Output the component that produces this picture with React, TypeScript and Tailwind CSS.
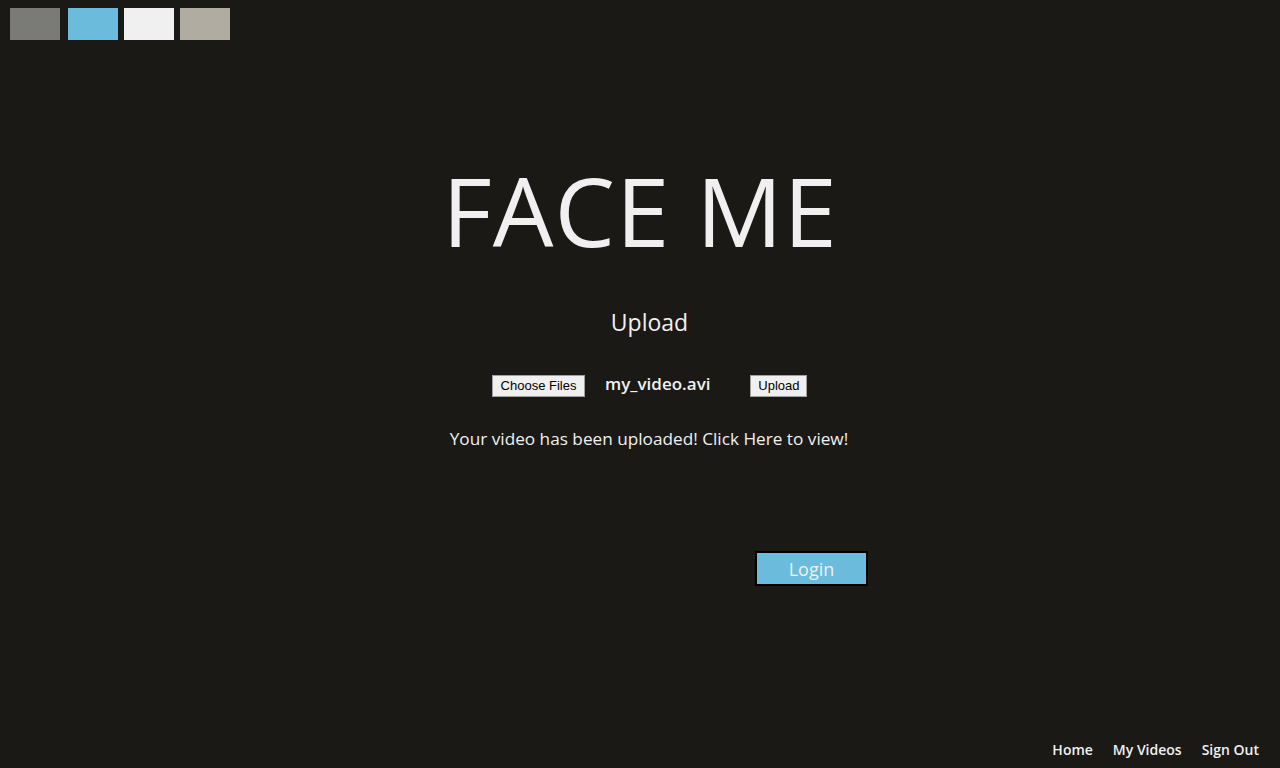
import React from 'react';

const font = { fontFamily: '"Open Sans", "Noto Sans", sans-serif' };
const arial = { fontFamily: '"Liberation Sans", Arial, sans-serif' };

function Swatches() {
  return (
    <div className="flex pt-2 pl-[10px]">
      <div className="w-[50px] h-8 bg-[#7a7b76]" />
      <div className="w-[50px] h-8 bg-[#6bbcdc] ml-2" />
      <div className="w-[50px] h-8 bg-[#f0f0f0] ml-[6px]" />
      <div className="w-[50px] h-8 bg-[#b0aca2] ml-[6px]" />
    </div>
  );
}

export default function App() {
  return (
    <div
      className="relative w-[1280px] h-[768px] bg-[#1a1915] text-[#f0f0f0] overflow-hidden flex flex-col"
      style={font}
    >
      <Swatches />

      <h1 className="mt-[122px] text-center text-[96px] leading-[96px] font-normal tracking-[1px]">
        FACE ME
      </h1>

      <h2 className="mt-[49px] pl-[19px] text-center text-[23px] leading-[30px]">Upload</h2>

      <div className="mt-[38px] flex items-center pl-[492px]">
        <button
          className="h-[22px] w-[93px] bg-[#f0f0f0] text-black text-[13px] border border-[#a0a0a0]"
          style={arial}
        >
          Choose Files
        </button>
        <span className="ml-5 text-[17px] font-semibold leading-[20px] -mt-[4px]">my_video.avi</span>
        <button
          className="ml-10 h-[22px] w-[57px] bg-[#f0f0f0] text-black text-[13px] border border-[#a0a0a0]"
          style={arial}
        >
          Upload
        </button>
      </div>

      <p className="mt-[31px] pl-[18px] text-center text-[17.2px] leading-[22px]">
        Your video has been uploaded! Click Here to view!
      </p>

      <div className="mt-[101px] pl-[755px]">
        <button className="w-[113px] h-[35px] bg-[#6bbcdc] border-2 border-black text-[#f0f0f0] text-[18px] leading-[28px]">
          Login
        </button>
      </div>

      <nav className="mt-auto flex justify-end gap-5 pr-[21px] pb-[8px] text-[14px] font-semibold">
        <a>Home</a>
        <a>My Videos</a>
        <a>Sign Out</a>
      </nav>
    </div>
  );
}
